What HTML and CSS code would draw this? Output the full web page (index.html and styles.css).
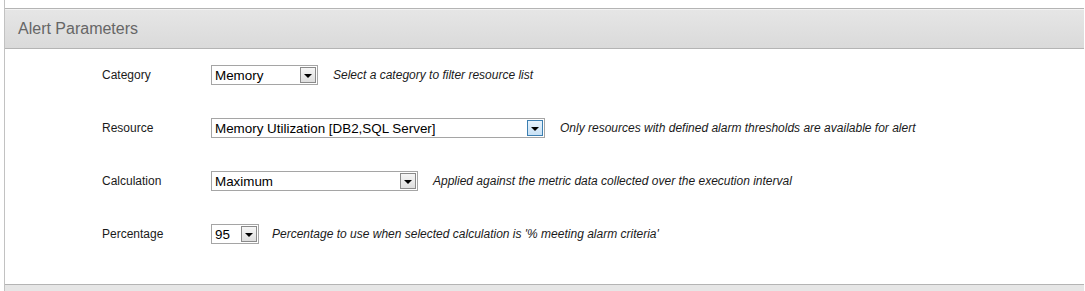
FILE: index.html
```html
<!DOCTYPE html>
<html>
<head>
<meta charset="utf-8">
<link rel="stylesheet" href="styles.css">
</head>
<body>
<div class="panel">
  <div class="header">Alert Parameters</div>
  <div class="content">
    <div class="row">
      <div class="label">Category</div>
      <div class="select w-cat"><span class="val">Memory</span><span class="btn"><span class="tri"></span></span></div>
      <div class="hint">Select a category to filter resource list</div>
    </div>
    <div class="row">
      <div class="label">Resource</div>
      <div class="select w-res focus"><span class="val">Memory Utilization [DB2,SQL Server]</span><span class="btn"><span class="tri"></span></span></div>
      <div class="hint">Only resources with defined alarm thresholds are available for alert</div>
    </div>
    <div class="row">
      <div class="label">Calculation</div>
      <div class="select w-calc"><span class="val">Maximum</span><span class="btn"><span class="tri"></span></span></div>
      <div class="hint">Applied against the metric data collected over the execution interval</div>
    </div>
    <div class="row">
      <div class="label">Percentage</div>
      <div class="select w-pct"><span class="val">95</span><span class="btn"><span class="tri"></span></span></div>
      <div class="hint pct">Percentage to use when selected calculation is '% meeting alarm criteria'</div>
    </div>
  </div>
  <div class="footer"></div>
</div>
</body>
</html>
```
FILE: styles.css
```css
html, body {
  margin: 0;
  padding: 0;
  background: #fff;
  font-family: "Liberation Sans", Arial, sans-serif;
}
.panel {
  margin: 0 1px 0 4px;
  padding-top: 8px;
  border-left: 1px solid #c2c2c2;
  height: 283px;
  display: flex;
  flex-direction: column;
}
.header {
  height: 39px;
  border-top: 1px solid #b4b4b4;
  border-bottom: 1px solid #b4b4b4;
  background: linear-gradient(#e6e6e6, #dadada);
  box-shadow: inset 0 1px 0 #f3f3f3;
  color: #666;
  font-size: 16px;
  line-height: 40px;
  padding-left: 13px;
}
.content {
  padding: 16px 0 0 97px;
  display: flex;
  flex-direction: column;
  gap: 33px;
  flex: 1;
}
.row {
  display: flex;
  align-items: center;
  height: 20px;
}
.label {
  width: 109px;
  font-size: 12px;
  color: #1a1a1a;
}
.select {
  box-sizing: border-box;
  height: 20px;
  border: 1px solid #a5a5a5;
  display: flex;
  align-items: center;
  background: #fff;
}
.w-cat { width: 107px; }
.w-res { width: 334px; }
.w-calc { width: 207px; }
.w-pct { width: 48px; }
.val {
  flex: 1;
  font-size: 13.4px;
  color: #000;
  padding-left: 3px;
  white-space: nowrap;
}
.btn {
  box-sizing: border-box;
  width: 16px;
  height: 16px;
  margin-right: 1px;
  border: 1px solid #8a8a8a;
  background: linear-gradient(#f6f6f6, #dedede);
  display: flex;
  align-items: center;
  justify-content: center;
}
.focus .btn {
  border-color: #3c7fb1;
  background: linear-gradient(#e8f3fc, #c8e1f5);
}
.tri {
  width: 0;
  height: 0;
  border-left: 4px solid transparent;
  border-right: 4px solid transparent;
  border-top: 4px solid #000;
  margin-top: 1px;
}
.hint {
  margin-left: 15px;
  font-size: 12px;
  font-style: italic;
  color: #1a1a1a;
  white-space: nowrap;
}
.hint.pct { margin-left: 13px; }
.footer {
  height: 6px;
  border-top: 1px solid #b4b4b4;
  background: #e6e6e6;
}
```
